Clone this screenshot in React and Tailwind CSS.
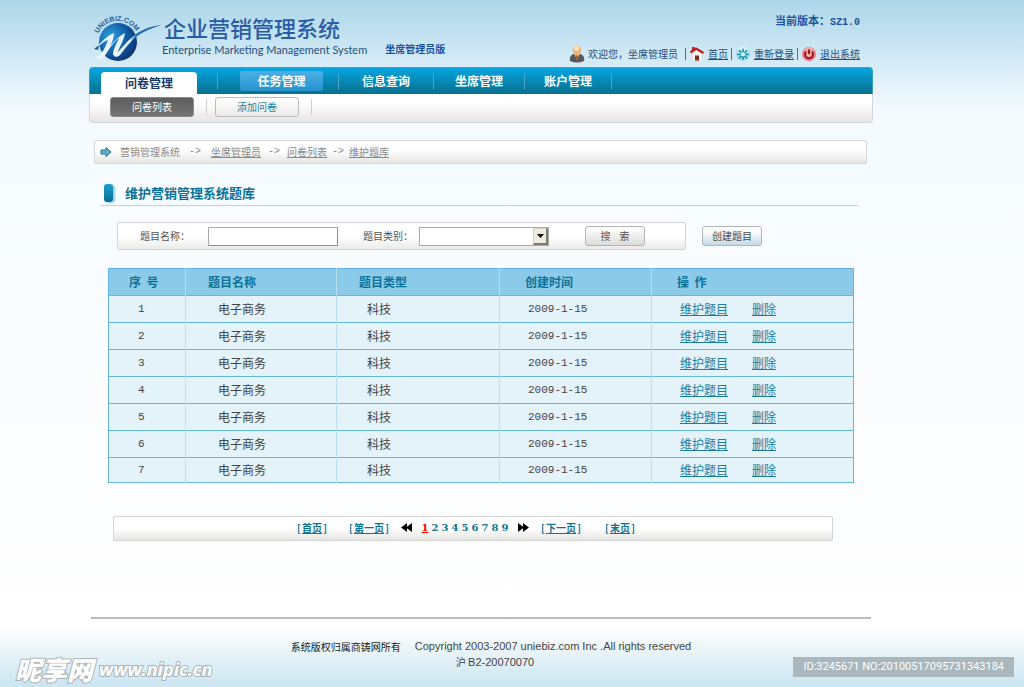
const navItems = [
  { label: '信息查询', width: 'w-[94px]' },
  { label: '坐席管理', width: 'w-[90px]' },
  { label: '账户管理', width: 'w-[86px]' },
]

const rows = [1, 2, 3, 4, 5, 6, 7].map(id => ({
  id,
  name: '电子商务',
  type: '科技',
  date: '2009-1-15',
}))

const pages = [2, 3, 4, 5, 6, 7, 8, 9]

function Logo() {
  return (
    <svg className="h-[50px] w-[70px] shrink-0 overflow-visible" viewBox="0 0 70 50" aria-hidden="true">
      <defs>
        <radialGradient id="ball" cx="0.3" cy="0.35" r="0.8">
          <stop offset="0" stopColor="#2f9fda" />
          <stop offset="0.45" stopColor="#1469b0" />
          <stop offset="1" stopColor="#06286a" />
        </radialGradient>
        <linearGradient id="sweep" x1="0" x2="1">
          <stop offset="0" stopColor="#e8f5fc" />
          <stop offset="0.35" stopColor="#e8f5fc" />
          <stop offset="0.48" stopColor="#2470b4" />
          <stop offset="1" stopColor="#1c5fa5" />
        </linearGradient>
        <path id="arc" d="M4.300 20.500 A21 21 0 0 1 44 24" />
      </defs>
      <circle cx="24" cy="29" r="19" fill="url(#ball)" />
      <g fill="#e8f5fc">
        <path d="M1 36 C7 29 13 23 20 20 C20 27 15 37 10 44 C7 47 3 47 2 44 C8 42 11 35 14 27 C10 28 6 32 1 36 Z" />
        <path d="M10 43 C15 33 23 24 31 20 C30 27 25 35 23 41 L19 42 C19 36 23 30 25 25 C19 29 14 38 10 43 Z" />
      </g>
      <path
        d="M19 40 C19 44 23 45 26 42 C32 34 40 24 48 20 C55 16 62 14 67 12 C58 13 49 16 42 21 C34 27 28 35 23 40 Z"
        fill="url(#sweep)"
      />
      <path d="M0 36 L5 32 L4 37 Z" fill="#1c5fa5" />
      <text
        fill="#2b5c9e"
        className="font-['Liberation_Sans',sans-serif] text-[7px] font-bold"
      >
        <textPath href="#arc">UNIEBIZ.COM</textPath>
      </text>
    </svg>
  )
}

function UserIcon() {
  return (
    <svg className="h-[18px] w-4" viewBox="0 0 16 18" aria-hidden="true">
      <path d="M1 16 Q0 10 5 9 L11 9 Q16 10 15 16 Q8 19 1 16 Z" fill="#56585b" />
      <path d="M5.500 9 L8 15 L10.500 9 Z" fill="#cfcfcf" />
      <path d="M7.200 10 L8.800 10 L9 13 L8 15 L7 13 Z" fill="#b5512a" />
      <ellipse cx="8" cy="5.500" rx="4.200" ry="5" fill="#eab676" />
      <ellipse cx="7.500" cy="3.500" rx="2.600" ry="2.400" fill="#fbe0b4" />
    </svg>
  )
}

function HomeIcon() {
  return (
    <svg className="h-4 w-4" viewBox="0 0 16 16" aria-hidden="true">
      <path d="M3 8 L8 4 L13 8 L13 15 L3 15 Z" fill="#f6f3f0" stroke="#d5d0cc" strokeWidth="0.500" />
      <path d="M3 1 H5.500 V5 H3 Z" fill="#b02020" />
      <path d="M1.500 6.500 L7 2.500 L14.500 7" fill="none" stroke="#c4191c" strokeWidth="2.200" />
      <path d="M6 9.500 H10 V14.500 H6 Z" fill="#7a2d25" />
    </svg>
  )
}

function RefreshIcon() {
  return (
    <svg className="h-4 w-4" viewBox="0 0 16 16" aria-hidden="true">
      <circle cx="8" cy="8" r="7" fill="#a3dff0" />
      <circle cx="8" cy="5.500" r="5" fill="#dcf5fa" />
      <g stroke="#1b8fb0" strokeWidth="1.800" strokeLinecap="round">
        <path d="M8 3.500V5.500M8 11V13M3 8.300H5M11 8.300H13M4.500 4.800L6 6.300M10 10.300L11.500 11.800M4.500 11.800L6 10.300M10 6.300L11.500 4.800" />
      </g>
    </svg>
  )
}

function PowerIcon() {
  return (
    <svg className="h-4 w-4" viewBox="0 0 16 16" aria-hidden="true">
      <circle cx="8" cy="8" r="7.200" fill="#e7868a" />
      <circle cx="8" cy="6" r="5" fill="#f0a9aa" />
      <path d="M5.200 5.500 A4 4 0 1 0 10.800 5.500" fill="none" stroke="#9c1420" strokeWidth="2" />
      <path d="M8 3.500V8" stroke="#9c1420" strokeWidth="2" />
    </svg>
  )
}

function ArrowIcon() {
  return (
    <svg className="h-3 w-3" viewBox="0 0 12 12" aria-hidden="true">
      <path
        d="M1 4 H6 V1.500 L11 6 L6 10.500 V8 H1 Z"
        fill="#5fb3cb"
        stroke="#1f7391"
        strokeLinejoin="round"
      />
    </svg>
  )
}

function SkipIcon({ back }) {
  return (
    <svg
      className={back ? 'h-[9px] w-[11px] rotate-180' : 'h-[9px] w-[11px]'}
      viewBox="0 0 11 9"
      aria-hidden="true"
    >
      <path d="M0 0 L6 4.500 L0 9 Z" fill="#000" />
      <path d="M5 0 L11 4.500 L5 9 Z" fill="#000" />
    </svg>
  )
}

function NavDivider() {
  return <span className="h-4 w-px bg-[#4aa5c6]" />
}

function UserDivider() {
  return <span className="h-3 w-px bg-[#3479a5]" />
}

function Header() {
  return (
    <header className="flex h-[67px] justify-between pr-[13px] pl-[5px]">
      <div className="flex">
        <div className="pt-[13px]">
          <Logo />
        </div>
        <div className="-ml-[2px] pt-[15px]">
          <h1 className="pl-[2px] text-[22px] leading-6 font-medium text-[#2a5ba5]">
            企业营销管理系统
          </h1>
          <p className="font-['Lato',sans-serif] text-[11px] leading-[22px] text-[#1d5080]">
            Enterprise Marketing Management System
          </p>
        </div>
        <p className="pt-[41px] pl-[18px] leading-4 font-bold text-[#1a52a0]">坐席管理员版</p>
      </div>
      <div className="flex flex-col items-end justify-between pt-3 pb-1">
        <p className="text-[11px] leading-4 font-bold text-[#1a52a0]">
          当前版本：<span className="font-['Liberation_Mono',monospace] text-[10px]">SZ1.0</span>
        </p>
        <div className="flex items-center gap-[3px] leading-[18px] text-[#24507c]">
          <UserIcon />
          <span className="mr-1">欢迎您，坐席管理员</span>
          <UserDivider />
          <HomeIcon />
          <a href="#home" className="underline">首页</a>
          <UserDivider />
          <RefreshIcon />
          <a href="#login" className="underline">重新登录</a>
          <UserDivider />
          <PowerIcon />
          <a href="#logout" className="underline">退出系统</a>
        </div>
      </div>
    </header>
  )
}

function Nav() {
  return (
    <nav>
      <div className="flex h-[27px] items-center rounded-t-sm border-x border-t border-[#3b9fc4] bg-gradient-to-b from-[#05a5e0] to-[#08708f] pl-[11px] text-xs font-bold text-white">
        <a
          href="#survey"
          className="mt-1 mr-5 flex h-[23px] w-24 items-center justify-center rounded-t-sm bg-white text-[#173a68]"
        >
          问卷管理
        </a>
        <NavDivider />
        <a
          href="#task"
          className="mr-[15px] ml-[22px] flex h-5 w-[83px] items-center justify-center rounded-xs bg-gradient-to-b from-[#4bb0e6] to-[#2493cd]"
        >
          任务管理
        </a>
        <NavDivider />
        {navItems.map(item => (
          <div key={item.label} className="flex items-center">
            <a href="#nav" className={`${item.width} text-center`}>{item.label}</a>
            <NavDivider />
          </div>
        ))}
      </div>
      <div className="flex h-[29px] items-center gap-2 rounded-b-sm border border-t-0 border-[#cfd6da] bg-gradient-to-b from-white from-30% to-[#e6e5e2] pb-[2px] pl-5">
        <a
          href="#list"
          className="flex h-5 w-[84px] items-center justify-center rounded-[3px] border border-[#8b8b8b] bg-gradient-to-b from-[#5d5d5d] to-[#757575] text-white"
        >
          问卷列表
        </a>
        <span className="ml-1 h-4 w-px bg-[#cfcfcf]" />
        <a
          href="#add"
          className="flex h-5 w-[84px] items-center justify-center rounded-[3px] border border-[#b9bcbe] bg-gradient-to-b from-white to-[#eceae8] text-[#1a7f9f]"
        >
          添加问卷
        </a>
        <span className="ml-1 h-4 w-px bg-[#cfcfcf]" />
      </div>
    </nav>
  )
}

function Breadcrumb() {
  return (
    <div className="mt-[17px] mr-[6px] ml-[5px] flex h-6 items-center rounded-xs border border-[#d5d5d5] bg-gradient-to-b from-white from-40% to-[#e5e5e3] pl-[5px] text-[#8a8a8a]">
      <ArrowIcon />
      <span className="ml-2">营销管理系统</span>
      <span className="mr-2 ml-[7px] w-4 text-center font-['Liberation_Mono',monospace]">-&gt;</span>
      <a href="#agent" className="underline">坐席管理员</a>
      <span className="mx-1 w-[18px] text-center font-['Liberation_Mono',monospace]">-&gt;</span>
      <a href="#list" className="underline">问卷列表</a>
      <span className="mx-1 w-[14px] text-center font-['Liberation_Mono',monospace]">-&gt;</span>
      <a href="#bank" className="underline">维护题库</a>
    </div>
  )
}

function SearchForm() {
  return (
    <form className="mt-4 ml-7 flex items-center gap-4" onSubmit={e => e.preventDefault()}>
      <div className="flex h-7 items-center rounded-xs border border-[#d5d5d5] bg-gradient-to-b from-white from-50% to-[#ebebe8] pr-10 pl-[22px] text-[#555]">
        <label htmlFor="title">题目名称：</label>
        <input
          id="title"
          type="text"
          className="ml-[18px] h-[19px] w-[130px] border border-[#a9a9a9] border-r-[#8f8f8f] border-b-[#8f8f8f] bg-white px-1"
        />
        <label htmlFor="category" className="ml-[25px]">题目类别：</label>
        <div className="relative ml-[6px]">
          <select
            id="category"
            className="block h-[19px] w-[130px] appearance-none border border-[#a9a9a9] bg-white px-1"
          >
            <option></option>
          </select>
          <span className="pointer-events-none absolute top-px right-px flex h-[17px] w-[15px] items-center justify-center border border-[#d9d5c5] border-r-2 border-r-[#7d7c70] border-b-2 border-b-[#7d7c70] bg-[#efecdd]">
            <svg className="h-[4px] w-[7px]" viewBox="0 0 7 4" aria-hidden="true">
              <path d="M0 0 H7 L3.500 4 Z" fill="#000" />
            </svg>
          </span>
        </div>
        <button
          type="submit"
          className="ml-9 h-5 w-[60px] rounded-[3px] border border-[#b3b3b3] bg-gradient-to-b from-white to-[#dcdcda] whitespace-pre"
        >
          搜{'    '}索
        </button>
      </div>
      <button
        type="button"
        className="h-5 w-[60px] rounded-[3px] border border-[#b0b5ba] bg-gradient-to-b from-[#fbfbfb] from-30% to-[#c4d8e6] text-[#4a4a4a]"
      >
        创建题目
      </button>
    </form>
  )
}

function QuestionTable() {
  return (
    <div className="mt-[18px] px-[19px]">
      <table className="w-full table-fixed border-collapse border border-[#63b6e4] text-xs leading-4 text-[#444]">
        <thead>
          <tr className="h-[27px] bg-[#8ccaea] text-left text-[#0a7397]">
            <th className="w-[77px] border-r border-[#b3dcf1] pl-5 whitespace-pre">序{'  '}号</th>
            <th className="w-[151px] border-r border-[#b3dcf1] pl-[22px]">题目名称</th>
            <th className="w-[163px] border-r border-[#b3dcf1] pl-[22px]">题目类型</th>
            <th className="w-[152px] border-r border-[#b3dcf1] pl-[25px]">创建时间</th>
            <th className="pl-[25px] whitespace-pre">操{'  '}作</th>
          </tr>
        </thead>
        <tbody>
          {rows.map(row => (
            <tr key={row.id} className="h-[27px] border-t border-[#63b6e4] bg-[#e4f2fa] last:h-[25px]">
              <td className="border-r border-r-[#b9e0f3] pl-[29px] font-['Liberation_Mono',monospace] text-[11px]">
                {row.id}
              </td>
              <td className="border-r border-r-[#b9e0f3] pl-8">{row.name}</td>
              <td className="border-r border-r-[#b9e0f3] pl-[30px]">{row.type}</td>
              <td className="border-r border-r-[#b9e0f3] pl-[28px] font-['Liberation_Mono',monospace] text-[11px]">
                {row.date}
              </td>
              <td className="pl-[28px] text-[#1a7ea2]">
                <a href="#edit" className="underline">维护题目</a>
                <a href="#delete" className="ml-6 underline">删除</a>
              </td>
            </tr>
          ))}
        </tbody>
      </table>
    </div>
  )
}

function PageLink({ children }) {
  return (
    <span className="flex items-center">
      <span className="w-[5px]">[</span>
      <a href="#page" className="underline">{children}</a>
      <span className="w-[5px] text-right">]</span>
    </span>
  )
}

function Pagination() {
  return (
    <div className="mt-[33px] mr-10 ml-6 flex h-[25px] items-center rounded-xs border border-[#d3d3d3] bg-gradient-to-b from-white from-50% to-[#e6e6e4] pb-[2px] pl-[183px] font-bold text-[#0f7393]">
      <div className="flex gap-[22px]">
        <PageLink>首页</PageLink>
        <PageLink>第一页</PageLink>
      </div>
      <a href="#prev" aria-label="上一页" className="ml-3">
        <SkipIcon back />
      </a>
      <div className="mx-2 flex text-center font-['DejaVu_Serif',serif]">
        <a href="#p1" className="w-[10px] text-[#f00] underline">1</a>
        {pages.map(page => (
          <a key={page} href="#page" className="w-[10px]">{page}</a>
        ))}
      </div>
      <a href="#next" aria-label="下一页" className="mr-3">
        <SkipIcon />
      </a>
      <div className="flex gap-6">
        <PageLink>下一页</PageLink>
        <PageLink>末页</PageLink>
      </div>
    </div>
  )
}

export default function App() {
  return (
    <div
      lang="zh-CN"
      className="relative min-h-screen bg-[linear-gradient(to_bottom,#acd6ea_0px,#f4faff_110px,#f8fcff_250px,#fcfdfe_500px,#ffffff_625px,#cbe5f1_687px)] pr-[151px] pl-[89px] font-['Noto_Sans_CJK_SC',sans-serif] text-[10px] leading-4"
    >
      <Header />
      <Nav />
      <main>
        <Breadcrumb />
        <div className="mt-[18px] mr-[15px] ml-[11px] flex h-6 items-start border-b border-[#bcd3e0] pl-1">
          <span className="mt-[2px] h-[18px] w-[9px] rounded-[3px] bg-gradient-to-b from-[#1fa0cc] to-[#066d95] shadow-[2px_1px_2px_#9cc8dc]" />
          <h2 className="ml-3 text-[13px] leading-[22px] font-bold text-[#0a7299]">
            维护营销管理系统题库
          </h2>
        </div>
        <SearchForm />
        <QuestionTable />
        <Pagination />
      </main>
      <footer className="mt-[76px] mr-[2px] ml-[2px] border-t-2 border-[#b9bcc0] pt-5 pl-5 text-[#444]">
        <div className="flex justify-center gap-[14px] leading-[15px]">
          <span className="text-[#222]">系统版权归属商铸网所有</span>
          <span className="font-['Liberation_Sans',sans-serif] text-[11px]">
            Copyright 2003-2007 uniebiz.com Inc .All rights reserved
          </span>
        </div>
        <p className="pl-2 text-center leading-[15px]">
          沪 <span className="font-['Liberation_Sans',sans-serif] text-[11px]">B2-20070070</span>
        </p>
      </footer>

      <div className="absolute bottom-[6px] left-[15px] flex items-center gap-[6px] font-bold text-white italic [-webkit-text-stroke:2px_#a9b3b9] [paint-order:stroke_fill]">
        <span className="text-[26px] leading-6 font-black">昵享网</span>
        <span className="font-['Open_Sans',sans-serif] text-[18px] leading-6">www.nipic.cn</span>
      </div>
      <div className="absolute right-[10px] bottom-[10px] flex h-5 items-center bg-[#aab7bd] px-[10px] font-['Roboto',sans-serif] text-[11px] text-white">
        ID:3245671 NO:20100517095731343184
      </div>
    </div>
  )
}
